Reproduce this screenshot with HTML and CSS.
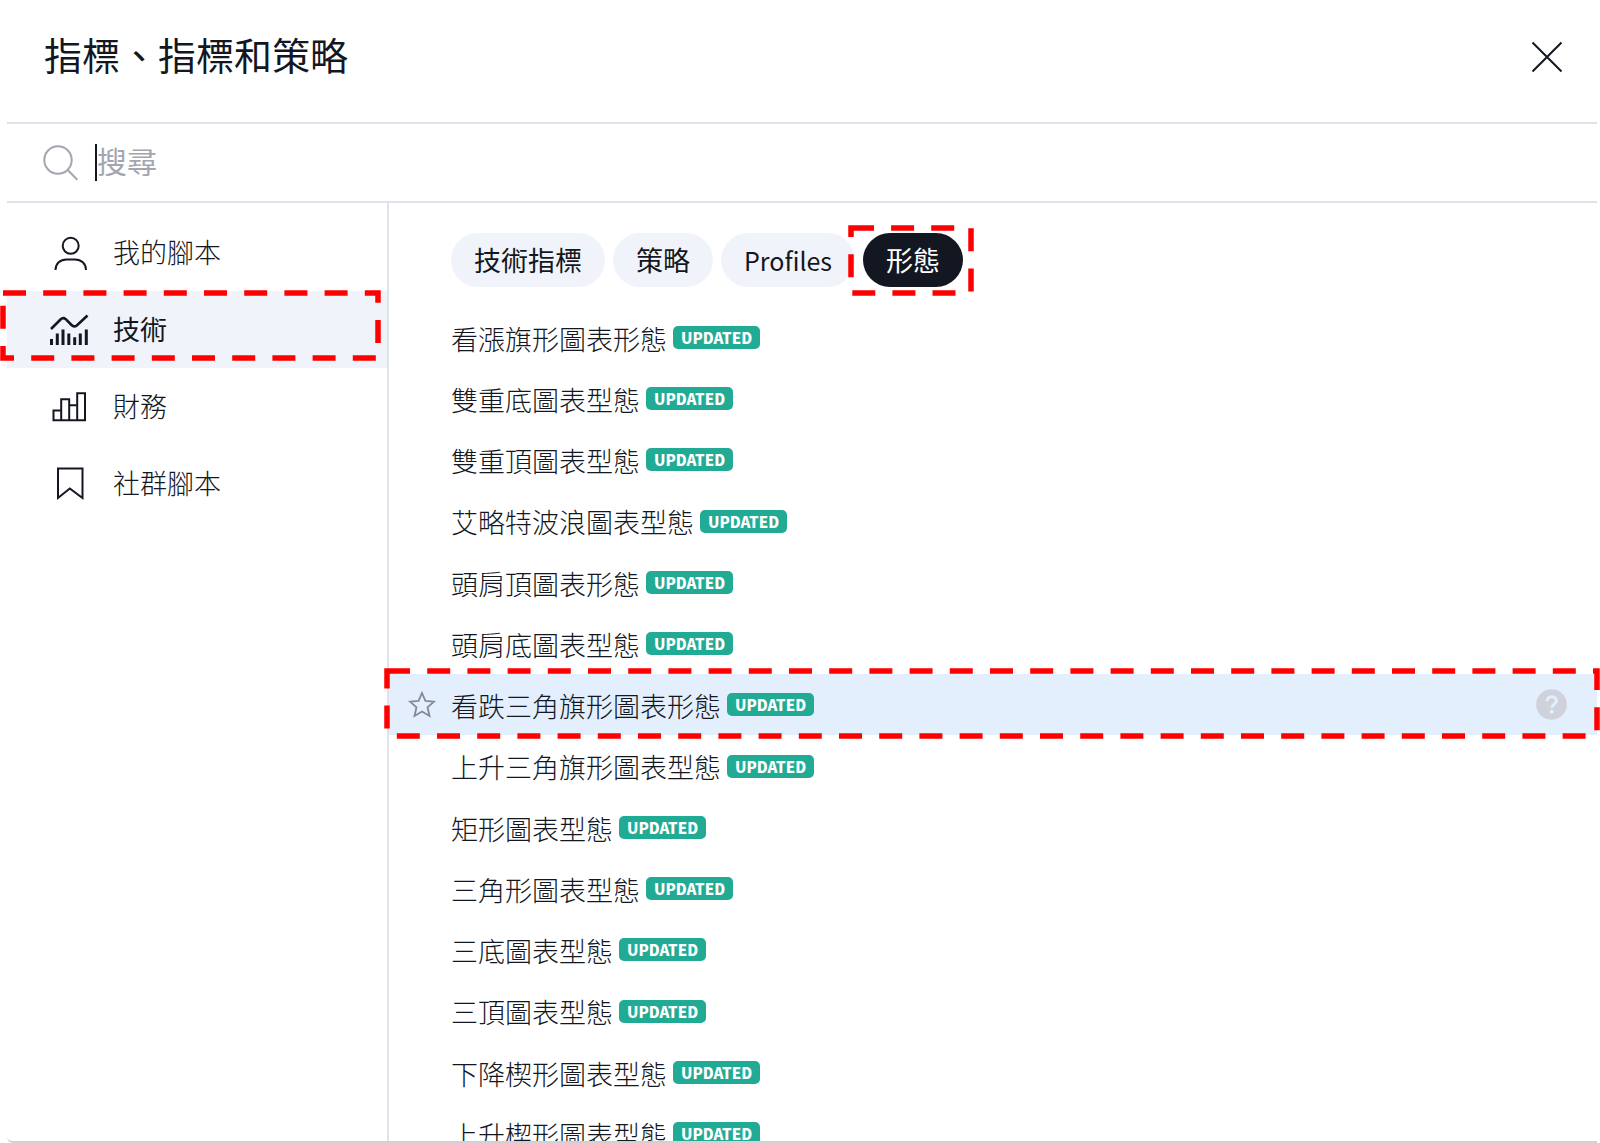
FILE: index.html
```html
<!DOCTYPE html>
<html lang="zh-Hant">
<head>
<meta charset="utf-8">
<meta name="viewport" content="width=device-width, initial-scale=1">
<title>指標、指標和策略</title>
<link rel="stylesheet" href="styles.css">
</head>
<body>
<main class="dialog">
  <header class="dialog-header">
    <h1 class="dialog-title">指標、指標和策略</h1>
    <button class="icon-button" type="button" aria-label="關閉">
      <svg width="32" height="32" viewBox="0 0 32 32" fill="none" stroke="#131722" stroke-width="2"><path d="M1.5 1.5l29 29M30.5 1.5l-29 29"/></svg>
    </button>
  </header>
  <div class="search">
    <svg width="36" height="36" viewBox="0 0 36 36" fill="none" stroke="#a3a6af" stroke-width="2"><circle cx="15" cy="15" r="13.7"/><path d="M24.7 25l9.6 9.8"/></svg>
    <input class="search-input" type="text" placeholder="搜尋" aria-label="搜尋">
  </div>
  <div class="dialog-body">
    <nav class="sidebar">
      <button class="side-item" type="button">
        <svg width="40" height="39" viewBox="0 0 40 39" fill="none" stroke="#131722" stroke-width="2"><circle cx="21.7" cy="12.8" r="8"/><path d="M6.5 37c0-6.500 4.800-10.500 11-10.500h8.500c6.200 0 11 4 11 10.500"/></svg>
        <span class="side-label">我的腳本</span>
      </button>
      <button class="side-item side-item-active" type="button">
        <svg width="40" height="39" viewBox="0 0 40 39"><path d="M2 19L11.500 9.500Q14 7 16.800 9.200L22.500 15Q25 17.500 27.800 15.500L38.500 5.500" fill="none" stroke="#131722" stroke-width="2.600"/><path fill="#131722" d="M1 29h3v6h-3zM6.800 23.500h3v11.500h-3zM12.500 19.500h3v15.500h-3zM18.300 23.500h3v11.500h-3zM24.200 27.200h3v7.800h-3zM29.800 23.500h3v11.500h-3zM35.800 19.500h3v15.500h-3z"/></svg>
        <span class="side-label">技術</span>
        <svg class="marker marker-side" aria-hidden="true"><rect class="marker-frame" x="3" y="3" stroke-width="5.5" stroke-dasharray="23 17.2"/></svg>
      </button>
      <button class="side-item" type="button">
        <svg width="40" height="39" viewBox="0 0 40 39" fill="none" stroke="#131722" stroke-width="2"><path d="M4.500 33.200V23.500h7.700v9.700zM12.200 33.200V12.300h8v20.900zM20.200 33.200V18.300h8M28.200 33.200V6.300h7.800v26.900zM4.500 33.200h31"/></svg>
        <span class="side-label">財務</span>
      </button>
      <button class="side-item" type="button">
        <svg width="40" height="39" viewBox="0 0 40 39" fill="none" stroke="#131722" stroke-width="2"><path d="M9 4.500h24.500v29.500l-12.700-9.500L9 34z"/></svg>
        <span class="side-label">社群腳本</span>
      </button>
    </nav>
    <section class="content">
      <div class="tabs">
        <button class="tab" type="button">技術指標</button>
        <button class="tab" type="button">策略</button>
        <button class="tab tab-latin" type="button">Profiles</button>
        <button class="tab tab-active" type="button">形態<svg class="marker marker-tab" aria-hidden="true"><rect class="marker-frame" x="3" y="3" stroke-width="5.5" stroke-dasharray="23 17.1"/></svg></button>
      </div>
      <ul class="list">
        <li class="row"><span class="name">看漲旗形圖表形態</span><span class="badge">UPDATED</span></li>
        <li class="row"><span class="name">雙重底圖表型態</span><span class="badge">UPDATED</span></li>
        <li class="row"><span class="name">雙重頂圖表型態</span><span class="badge">UPDATED</span></li>
        <li class="row"><span class="name">艾略特波浪圖表型態</span><span class="badge">UPDATED</span></li>
        <li class="row"><span class="name">頭肩頂圖表形態</span><span class="badge">UPDATED</span></li>
        <li class="row"><span class="name">頭肩底圖表型態</span><span class="badge">UPDATED</span></li>
        <li class="row row-active">
          <button class="icon-button star" type="button" aria-label="加入收藏">
            <svg width="28" height="28" viewBox="0 0 28 28" fill="none" stroke="#868993" stroke-width="1.800"><path d="M14 2l3.400 7.800 8.600.8-6.500 5.700 2 8.700-7.500-4.500L6.500 25l2-8.700L2 10.600l8.600-.8z"/></svg>
          </button>
          <span class="name">看跌三角旗形圖表形態</span><span class="badge">UPDATED</span>
          <button class="icon-button help" type="button" aria-label="說明">
            <svg width="31" height="31" viewBox="0 0 31 31"><circle cx="15.500" cy="15.500" r="15.300" fill="#cfd1db"/><path d="M11 12.200c0-6 9.500-5.700 9.500-.4 0 3.500-4.700 3.300-4.700 7" fill="none" stroke="#e3effd" stroke-width="3"/><circle cx="15.700" cy="22.800" r="2" fill="#e3effd"/></svg>
          </button>
          <svg class="marker marker-row" aria-hidden="true"><rect class="marker-frame" x="3" y="3" stroke-width="5.5" stroke-dasharray="23 17.2"/></svg>
        </li>
        <li class="row"><span class="name">上升三角旗形圖表型態</span><span class="badge">UPDATED</span></li>
        <li class="row"><span class="name">矩形圖表型態</span><span class="badge">UPDATED</span></li>
        <li class="row"><span class="name">三角形圖表型態</span><span class="badge">UPDATED</span></li>
        <li class="row"><span class="name">三底圖表型態</span><span class="badge">UPDATED</span></li>
        <li class="row"><span class="name">三頂圖表型態</span><span class="badge">UPDATED</span></li>
        <li class="row"><span class="name">下降楔形圖表型態</span><span class="badge">UPDATED</span></li>
        <li class="row"><span class="name">上升楔形圖表型態</span><span class="badge">UPDATED</span></li>
      </ul>
    </section>
  </div>
</main>
</body>
</html>
```
FILE: styles.css
```css
* {
  box-sizing: border-box;
}

body {
  margin: 0;
  background: #fff;
  color: #131722;
  font-family: "Noto Sans CJK TC", "Noto Sans", sans-serif;
  font-size: 27px;
  font-weight: 300;
  overflow: hidden;
}

button {
  padding: 0;
  border: 0;
  background: none;
  color: inherit;
  font: inherit;
}

svg {
  display: block;
  flex: none;
}

.dialog {
  display: flex;
  flex-direction: column;
  height: 100vh;
  margin: 0 3px 0 7px;
  border-bottom: 2px solid #d1d1d3;
  border-bottom-left-radius: 6px;
}

.dialog-header {
  display: flex;
  flex: none;
  align-items: center;
  justify-content: space-between;
  height: 124px;
  padding: 0 34px 8px 37px;
  border-bottom: 2px solid #e0e3eb;
}

.dialog-title {
  margin: 0;
  padding-bottom: 6px;
  font-size: 38px;
  font-weight: 400;
  line-height: 56px;
}

.search {
  display: flex;
  flex: none;
  align-items: center;
  gap: 16px;
  height: 79px;
  padding: 0 36px;
  border-bottom: 2px solid #e0e3eb;
}

.search-input {
  flex: 1;
  height: 37px;
  padding: 0 0 5px;
  border: 0;
  border-left: 2px solid #131722;
  outline: 0;
  background: none;
  color: inherit;
  font: inherit;
  font-size: 30px;
  font-weight: 400;
  line-height: 32px;
}

.search-input::placeholder {
  color: #a3a6af;
}

.dialog-body {
  display: flex;
  flex: 1;
  min-height: 0;
  overflow-x: visible;
  overflow-y: clip;
}

.sidebar {
  display: flex;
  flex: none;
  flex-direction: column;
  width: 382px;
  padding-top: 11px;
  border-right: 2px solid #e0e3eb;
}

.side-item {
  position: relative;
  display: flex;
  align-items: center;
  gap: 24px;
  height: 77px;
  padding-left: 42px;
  line-height: 40px;
}

.side-label {
  padding-bottom: 2px;
}

.side-item-active {
  background: #f0f3fa;
  font-weight: 400;
}

.content {
  flex: 1;
  min-width: 0;
  padding-top: 30px;
}

.tabs {
  display: flex;
  gap: 8px;
  margin-bottom: 20px;
  padding-left: 62px;
}

.tab {
  position: relative;
  height: 54px;
  padding: 0 23px;
  border-radius: 27px;
  background: #f0f3fa;
  font-weight: 400;
  line-height: 54px;
}

.tab-latin {
  font-size: 25px;
}

.tab-active {
  background: #131722;
  color: #fff;
}

.list {
  display: grid;
  grid-auto-rows: 61px 61px 61px 62px;
  margin: 0;
  padding: 0;
  list-style: none;
}

.row {
  position: relative;
  display: flex;
  align-items: center;
  gap: 6px;
  padding: 0 30px 0 62px;
}

.row-active {
  padding-left: 19px;
  background: #e3effd;
}

.name {
  padding-top: 2px;
  line-height: 40px;
}

.badge {
  height: 23px;
  padding: 0 8px;
  border-radius: 5px;
  background: #22ab94;
  color: #fff;
  font-size: 15px;
  font-weight: 900;
  line-height: 23px;
}

.star {
  margin-right: 9px;
}

.help {
  margin-left: auto;
}

.marker {
  position: absolute;
  z-index: 1;
  overflow: visible;
  pointer-events: none;
}

.marker-frame {
  width: calc(100% - 6px);
  height: calc(100% - 6px);
  fill: none;
  stroke: #f00;
}

.marker-side {
  top: -1px;
  left: -7px;
  width: calc(100% + 1px);
  height: calc(100% - 6px);
}

.marker-tab {
  top: -8px;
  left: -15px;
  width: calc(100% + 26px);
  height: calc(100% + 17px);
}

.marker-row {
  top: -6px;
  left: -5px;
  width: calc(100% + 8px);
  height: calc(100% + 10px);
}
```
